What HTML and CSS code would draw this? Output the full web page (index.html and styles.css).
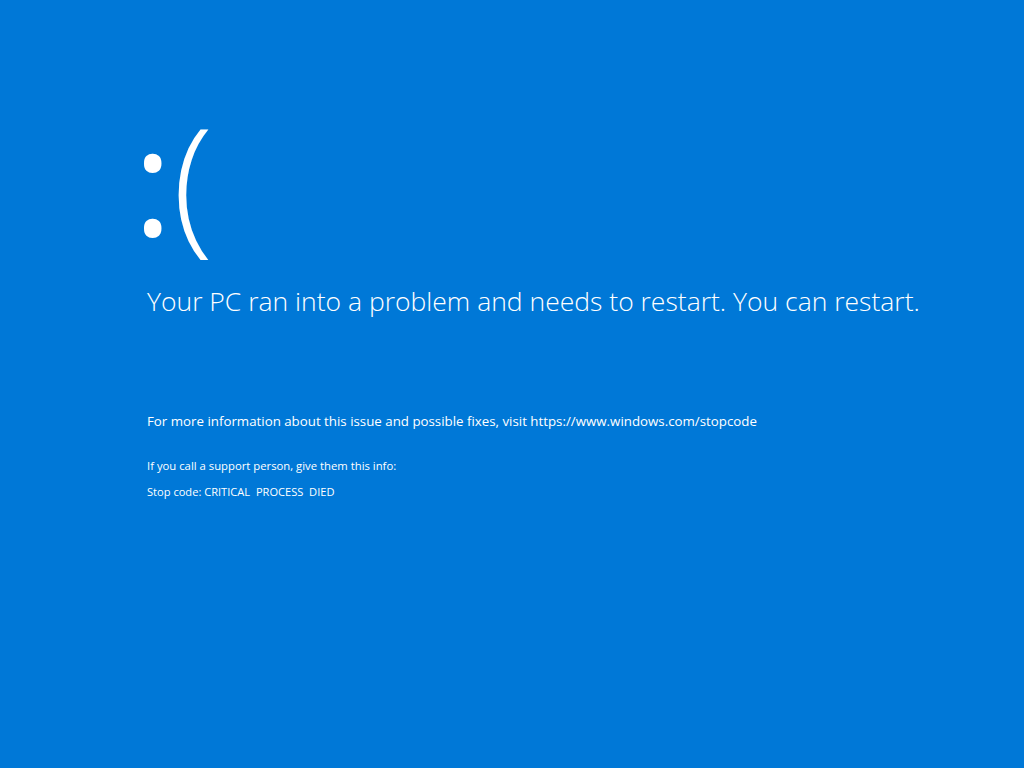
FILE: index.html
```html
<!DOCTYPE html>
<html lang="en">
<head>
<meta charset="utf-8">
<title>Your PC ran into a problem</title>
<link rel="stylesheet" href="styles.css">
</head>
<body>
<main class="screen">
  <div class="face"><span class="eyes">:</span>(</div>
  <p class="headline">Your PC ran into a problem and needs to restart. You can restart.</p>
  <p class="info">For more information about this issue and possible fixes, visit https://www.windows.com/stopcode</p>
  <p class="support">If you call a support person, give them this info:</p>
  <p class="stop">Stop code: CRITICAL&nbsp; PROCESS&nbsp; DIED</p>
</main>
</body>
</html>
```

FILE: styles.css
```css
html, body {
  margin: 0;
  padding: 0;
  height: 100%;
  background: #0078d7;
}
body {
  font-family: "Open Sans", "Noto Sans", sans-serif;
  color: #ffffff;
}
.screen {
  display: flex;
  flex-direction: column;
  align-items: flex-start;
  padding: 78px 0 0 140px;
  height: 768px;
  box-sizing: border-box;
}
.face {
  font-weight: 300;
  font-size: 150px;
  line-height: 200px;
  margin: 0 0 0 -7px;
}
.eyes {
  font-weight: 400;
  letter-spacing: 0;
}
.headline {
  font-weight: 300;
  font-size: 26.5px;
  line-height: 36px;
  margin: 5px 0 0;
  padding-left: 7px;
}
.info {
  font-weight: 400;
  font-size: 13.3px;
  line-height: 18px;
  margin: 93px 0 0;
  padding-left: 7px;
}
.support {
  font-size: 11.3px;
  line-height: 16px;
  margin: 28px 0 0;
  padding-left: 7px;
}
.stop {
  font-size: 11.1px;
  line-height: 16px;
  margin: 10px 0 0;
  padding-left: 7px;
}
```
